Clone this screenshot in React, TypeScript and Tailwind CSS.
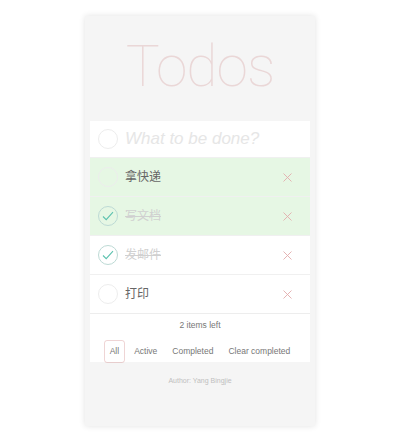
import React, { useState } from 'react';

type Todo = { id: number; text: string; done: boolean; hl: boolean };

const initial: Todo[] = [
  { id: 1, text: '拿快递', done: false, hl: true },
  { id: 2, text: '写文档', done: true, hl: true },
  { id: 3, text: '发邮件', done: true, hl: false },
  { id: 4, text: '打印', done: false, hl: false },
];

const Check = ({ done }: { done: boolean }) => (
  <span
    className={`flex h-[20px] w-[20px] shrink-0 items-center justify-center rounded-full border ${
      done ? 'border-[#bddad5]' : 'border-[#ededed]'
    }`}
  >
    {done && (
      <svg width="12" height="10" viewBox="0 0 12 10" fill="none">
        <path d="M1 5.5 L4.2 8.6 L11 1.2" stroke="#5dc2af" strokeWidth="1.1" />
      </svg>
    )}
  </span>
);

const Cross = () => (
  <svg width="9" height="9" viewBox="0 0 9 9">
    <path d="M0.5 0.5 L8.5 8.5 M8.5 0.5 L0.5 8.5" stroke="#e2acac" strokeWidth="0.9" />
  </svg>
);

export default function App() {
  const [todos] = useState<Todo[]>(initial);
  const left = todos.filter((t) => !t.done).length;

  return (
    <div
      className="flex min-h-[441px] justify-center bg-white pt-[16px]"
      style={{ fontFamily: '"Liberation Sans", "Noto Sans CJK SC", sans-serif' }}
    >
      <div className="flex h-[410px] w-[230px] flex-col bg-[#f5f5f5] px-[5px] shadow-[0_0_6px_rgba(0,0,0,0.12)]">
        <h1
          className="flex h-[105px] items-center justify-center pb-[4px] text-[57px] font-thin tracking-[-1px] text-[rgba(175,47,47,0.15)]"
          style={{ fontFamily: 'Roboto, "Liberation Sans", sans-serif' }}
        >
          Todos
        </h1>

        <div className="bg-white">
          <div className="flex h-[36px] items-center gap-[7px] px-[8px]">
            <Check done={false} />
            <span className="text-[17px] italic text-[#e6e6e6]">What to be done?</span>
          </div>

          {todos.map((t) => (
            <div
              key={t.id}
              className={`flex h-[39px] items-center gap-[7px] border-t border-[#f0f0f0] px-[8px] ${
                t.hl ? 'bg-[#e6f7e4]' : 'bg-white'
              }`}
            >
              <Check done={t.done} />
              <span
                className={`flex-1 text-[12px] ${
                  t.done ? 'text-[#d0d0d0] line-through' : 'text-[#666]'
                }`}
              >
                {t.text}
              </span>
              <span className="pr-[10px]">
                <Cross />
              </span>
            </div>
          ))}

          <div className="flex h-[49px] flex-col items-center justify-center gap-[8px] border-t border-[#ededed] pt-[6px] text-[8.5px] text-[#777]">
            <span className="text-[8.5px]">{left} items left</span>
            <div className="flex items-center pr-[6px]">
              <span className="rounded-[3px] border border-[rgba(175,47,47,0.2)] px-[5px] py-[4px]">All</span>
              <span className="ml-[9px]">Active</span>
              <span className="ml-[15px]">Completed</span>
              <span className="ml-[15px]">Clear completed</span>
            </div>
          </div>
        </div>

        <div className="pt-[14px] text-center text-[7px] text-[#bfbfbf]">Author: Yang Bingjie</div>
      </div>
    </div>
  );
}
